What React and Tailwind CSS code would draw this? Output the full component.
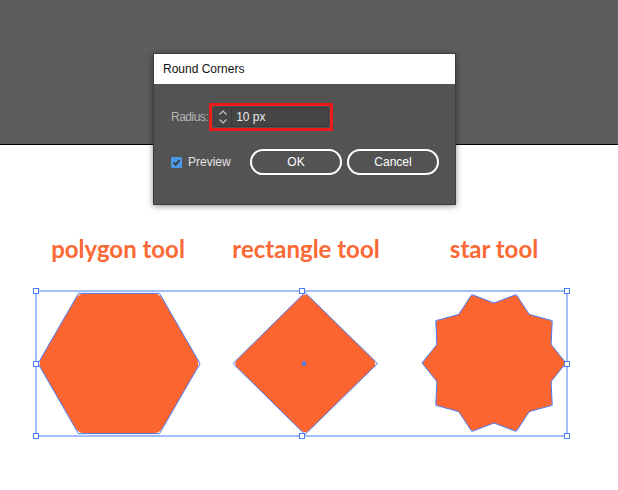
import React from 'react';

const ORANGE = '#fc6530';
const BLUE = '#4a7cf7';

// rounded polygon path: cut each corner by d px and bend it through the vertex
const roundedPath = (pts, d) => {
  const n = pts.length;
  let path = '';
  for (let i = 0; i < n; i++) {
    const p = pts[i];
    const a = pts[(i - 1 + n) % n];
    const b = pts[(i + 1) % n];
    const la = Math.hypot(a[0] - p[0], a[1] - p[1]);
    const lb = Math.hypot(b[0] - p[0], b[1] - p[1]);
    const s = [p[0] + ((a[0] - p[0]) * d) / la, p[1] + ((a[1] - p[1]) * d) / la];
    const e = [p[0] + ((b[0] - p[0]) * d) / lb, p[1] + ((b[1] - p[1]) * d) / lb];
    path += `${i === 0 ? 'M' : 'L'}${s[0].toFixed(2)},${s[1].toFixed(2)} Q${p[0]},${p[1]} ${e[0].toFixed(2)},${e[1].toFixed(2)} `;
  }
  return path + 'Z';
};

const sharp = (pts) => pts.map((p) => p.join(',')).join(' ');

const hexagon = (() => {
  const cx = 119, cy = 363.5, r = 81;
  return [0, 60, 120, 180, 240, 300].map((deg) => {
    const a = ((deg + 180) * Math.PI) / 180;
    return [+(cx + r * Math.cos(a)).toFixed(2), +(cy + r * Math.sin(a)).toFixed(2)];
  });
})();

const diamond = [[305, 292.5], [377.5, 363.5], [305, 434.5], [233, 363.5]];

const star = (() => {
  const cx = 494, cy = 363, outer = 72, inner = 60;
  const pts = [];
  for (let k = 0; k < 20; k++) {
    const deg = k * 18;
    const r = k % 2 === 0 ? inner : outer;
    const a = (deg * Math.PI) / 180;
    pts.push([+(cx + r * Math.sin(a)).toFixed(2), +(cy - r * Math.cos(a)).toFixed(2)]);
  }
  return pts;
})();

const handles = [
  [36, 291], [302, 291], [567, 291],
  [36, 364], [567, 364],
  [36, 436], [302, 436], [567, 436],
];

const Shape = ({ pts, d }) => (
  <g>
    <path d={roundedPath(pts, d)} fill={ORANGE} />
    <polygon points={sharp(pts)} fill="none" stroke={BLUE} strokeWidth="1" />
  </g>
);

const Label = ({ x, children }) => (
  <text x={x} y={258} textAnchor="middle" className="font-['Lato'] font-bold text-[24px] fill-[#fb6934]">
    {children}
  </text>
);

const Spinner = () => (
  <svg width="10" height="16" viewBox="0 0 10 16" fill="none" stroke="#c8c8c8" strokeWidth="1.2">
    <path d="M1.5 5.5 L5 2 L8.5 5.5" />
    <path d="M1.5 10.5 L5 14 L8.5 10.5" />
  </svg>
);

const RoundCornersDialog = () => (
  <div className="absolute left-[153px] top-[53px] w-[303px] h-[152px] flex flex-col border border-[#3d3d3d] bg-[#535353] shadow-[0_1px_6px_rgba(0,0,0,0.45)] font-['Liberation_Sans',sans-serif]">
    <div className="h-[30px] bg-white flex items-center pl-[9px] text-[12px] text-[#111]">Round Corners</div>
    <div className="flex flex-col pt-[19px] pl-[17px]">
      <div className="flex items-center h-[28px]">
        <span className="shrink-0 whitespace-nowrap text-[12px] tracking-[-0.5px] text-[#b4b4b4]">Radius:</span>
        <div className="ml-[1px] w-[124px] h-[28px] border-[3px] border-[#ea1b1b] p-[1px]">
          <div className="h-full flex items-center bg-[#454545] border border-[#3a3a3a] rounded-[2px]">
            <div className="w-[18px] h-full flex items-center justify-center border-r border-[#383838]">
              <Spinner />
            </div>
            <span className="pl-[4px] text-[12px] text-[#ececec]">10 px</span>
          </div>
        </div>
      </div>
      <div className="flex items-center h-[26px] mt-[18px]">
        <div className="w-[79px] flex items-center gap-[6px]">
          <div className="w-[11px] h-[11px] bg-[#4a97e6] rounded-[1px] flex items-center justify-center">
            <svg width="9" height="9" viewBox="0 0 9 9" fill="none" stroke="#3b3b3b" strokeWidth="1.8">
              <path d="M1.5 4.5 L3.7 6.7 L7.5 2.2" />
            </svg>
          </div>
          <span className="text-[12px] text-[#e4e4e4]">Preview</span>
        </div>
        <button className="w-[92px] h-[26px] rounded-full border-2 border-white text-[12px] text-white">OK</button>
        <button className="ml-[5px] w-[92px] h-[26px] rounded-full border-2 border-white text-[12px] text-white">Cancel</button>
      </div>
    </div>
  </div>
);

const App = () => (
  <div className="relative w-[618px] h-[490px] bg-white overflow-hidden">
    <div className="h-[145px] bg-[#5d5d5d] border-b border-black" />
    <svg width="618" height="345" viewBox="0 145 618 345" className="block">
      <Label x={118}>polygon tool</Label>
      <Label x={306}>rectangle tool</Label>
      <Label x={494}>star tool</Label>

      <Shape pts={hexagon} d={7} />
      <Shape pts={diamond} d={6} />
      <Shape pts={star} d={3} />

      <rect x="36" y="291" width="531" height="145" fill="none" stroke={BLUE} strokeWidth="1" />
      {handles.map(([x, y]) => (
        <rect key={`${x}-${y}`} x={x - 2.5} y={y - 2.5} width="5" height="5" fill="white" stroke={BLUE} strokeWidth="1" />
      ))}
      <rect x="302" y="361.5" width="4" height="4" fill={BLUE} />
    </svg>
    <RoundCornersDialog />
  </div>
);

export default App;
